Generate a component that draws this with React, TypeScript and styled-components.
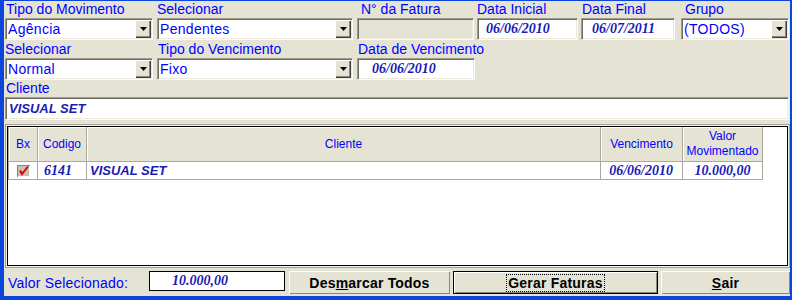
import React from 'react'
import styled, {createGlobalStyle} from 'styled-components'

const FACE = '#e5e4d4'
const BLUE = '#0000ff'
const INK = '#1a1ab4'
const GRID_LINE = '#aaa99c'

const GlobalStyle = createGlobalStyle`
  * { box-sizing: border-box; }
  body {
    margin: 0;
    background: #fff;
    font-family: 'Liberation Sans', Arial, sans-serif;
  }
`

const Window = styled.div`
  width: 792px;
  height: 300px;
  background: ${FACE};
  border-style: solid;
  border-color: #0c45dc;
  border-width: 1px 2px 4px 4px;
  padding-left: 1px;
  display: flex;
  flex-direction: column;
  overflow: hidden;
`

const Row = styled.div<{$mt?: number}>`
  display: flex;
  margin-top: ${(p) => p.$mt || 0}px;
`

const Field = styled.div<{$w: number; $ml?: number}>`
  width: ${(p) => p.$w}px;
  margin-left: ${(p) => p.$ml || 0}px;
  display: flex;
  flex-direction: column;
`

const Label = styled.label<{$indent?: number}>`
  height: 17px;
  line-height: 17px;
  padding-left: ${(p) => p.$indent || 0}px;
  font-size: 14px;
  color: ${BLUE};
  white-space: nowrap;
`

const Sunken = styled.div<{$h?: number; $disabled?: boolean}>`
  height: ${(p) => p.$h || 22}px;
  background: ${(p) => (p.$disabled ? FACE : '#fff')};
  border: 1px solid;
  border-color: #9d9b8c #fbfbf8 #fbfbf8 #9d9b8c;
  box-shadow: inset 1px 1px 0 #6f6d62, inset -1px -1px 0 #eceadf;
  display: flex;
  align-items: center;
`

const SelectText = styled.span`
  flex: 1;
  padding-left: 2px;
  font-size: 14px;
  letter-spacing: 0.3px;
  color: ${BLUE};
  white-space: nowrap;
`

const DropButton = styled.span`
  width: 16px;
  height: 18px;
  margin-right: 1px;
  background: ${FACE};
  box-shadow: inset 1px 1px 0 #fff, inset -1px -1px 0 #404040,
    inset -2px -2px 0 #8a887c;
  display: flex;
  align-items: center;
  justify-content: center;
`

const DateText = styled.span<{$pad: number}>`
  padding-left: ${(p) => p.$pad}px;
  font-family: 'Liberation Serif', 'Times New Roman', serif;
  font-weight: bold;
  font-style: italic;
  font-size: 14px;
  color: ${INK};
`

const ClientText = styled.span`
  padding-left: 3px;
  font-weight: bold;
  font-style: italic;
  font-size: 13px;
  color: ${INK};
`

const GridFrame = styled.div`
  margin-top: 4px;
  width: 785px;
  height: 144px;
  padding: 2px;
  background: #fff;
  border: 1px solid #a3a192;
  box-shadow: inset 0 0 0 1px #f4f3ec, inset 0 0 0 2px #000;
`

const Table = styled.div`
  width: 754px;
  display: grid;
  grid-template-columns: 29px 49px 514px 82px 80px;
  grid-template-rows: 35px 18px;
  border-left: 1px solid ${GRID_LINE};
`

const HeadCell = styled.div`
  background: ${FACE};
  border-right: 1px solid ${GRID_LINE};
  border-bottom: 1px solid ${GRID_LINE};
  box-shadow: inset 1px 1px 0 #fff;
  display: flex;
  align-items: center;
  justify-content: center;
  text-align: center;
  font-size: 12px;
  line-height: 15px;
  color: ${BLUE};
`

const Cell = styled.div<{$align?: string; $pad?: number; $serif?: boolean}>`
  border-right: 1px solid ${GRID_LINE};
  border-bottom: 1px solid ${GRID_LINE};
  display: flex;
  align-items: center;
  justify-content: ${(p) => p.$align || 'flex-start'};
  padding: 0 ${(p) => p.$pad || 0}px;
  font-family: ${(p) =>
    p.$serif
      ? "'Liberation Serif', 'Times New Roman', serif"
      : "'Liberation Sans', Arial, sans-serif"};
  font-weight: bold;
  font-style: italic;
  font-size: ${(p) => (p.$serif ? 14 : 13)}px;
  color: ${INK};
  white-space: nowrap;
`

const Footer = styled.div`
  margin-top: 3px;
  height: 23px;
  display: flex;
`

const FooterLabel = styled.span`
  width: 144px;
  padding-left: 3px;
  align-self: center;
  font-size: 14px;
  letter-spacing: 0.2px;
  color: ${BLUE};
`

const ValueBox = styled.div`
  width: 136px;
  height: 20px;
  padding-left: 22px;
  background: #fff;
  border: 1px solid #000;
  display: flex;
  align-items: center;
  font-family: 'Liberation Serif', 'Times New Roman', serif;
  font-weight: bold;
  font-style: italic;
  font-size: 14px;
  color: ${INK};
`

const Button = styled.button<{$w: number; $ml: number; $default?: boolean}>`
  width: ${(p) => p.$w}px;
  height: 23px;
  margin-left: ${(p) => p.$ml}px;
  padding: 0;
  background: ${FACE};
  border: ${(p) => (p.$default ? '1px solid #000' : 'none')};
  box-shadow: inset 1px 1px 0 #fff, inset -1px -1px 0 #8a887c;
  display: flex;
  align-items: center;
  justify-content: center;
  font-family: 'Liberation Sans', Arial, sans-serif;
  font-weight: bold;
  font-size: 14px;
  letter-spacing: 0.2px;
  color: #000;
`

const Focus = styled.span`
  border: 1px dotted #000;
  padding: 0 1px;
  line-height: 16px;
`

const Arrow = () => (
  <svg width="7" height="4" viewBox="0 0 7 4">
    <polygon points="0,0 7,0 3.5,4" fill="#000" />
  </svg>
)

const Check = () => (
  <svg width="13" height="12" viewBox="0 0 13 12">
    <rect x="0.5" y="0.5" width="12" height="11" fill="#c4c2b8" stroke="#85837a" />
    <line x1="1" y1="11.5" x2="12.5" y2="11.5" stroke="#fff" />
    <line x1="12.5" y1="1" x2="12.5" y2="11.5" stroke="#fff" />
    <polyline points="3,5.5 5,9 11,1.5" fill="none" stroke="#e00000" strokeWidth="2" />
  </svg>
)

const Select = ({value}: {value: string}) => (
  <Sunken>
    <SelectText>{value}</SelectText>
    <DropButton>
      <Arrow />
    </DropButton>
  </Sunken>
)

const App = () => {
  return (
    <>
      <GlobalStyle />
      <Window>
        <Row>
          <Field $w={148}>
            <Label $indent={1}>Tipo do Movimento</Label>
            <Select value="Agência" />
          </Field>
          <Field $w={196} $ml={4}>
            <Label>Selecionar</Label>
            <Select value="Pendentes" />
          </Field>
          <Field $w={117} $ml={4}>
            <Label $indent={4}>N° da Fatura</Label>
            <Sunken $disabled />
          </Field>
          <Field $w={101} $ml={3}>
            <Label>Data Inicial</Label>
            <Sunken>
              <DateText $pad={8}>06/06/2010</DateText>
            </Sunken>
          </Field>
          <Field $w={94} $ml={3}>
            <Label $indent={1}>Data Final</Label>
            <Sunken>
              <DateText $pad={10}>06/07/2011</DateText>
            </Sunken>
          </Field>
          <Field $w={108} $ml={6}>
            <Label $indent={4}>Grupo</Label>
            <Select value="(TODOS)" />
          </Field>
        </Row>
        <Row $mt={1}>
          <Field $w={148}>
            <Label>Selecionar</Label>
            <Select value="Normal" />
          </Field>
          <Field $w={196} $ml={4}>
            <Label $indent={1}>Tipo do Vencimento</Label>
            <Select value="Fixo" />
          </Field>
          <Field $w={118} $ml={4}>
            <Label $indent={1}>Data de Vencimento</Label>
            <Sunken>
              <DateText $pad={14}>06/06/2010</DateText>
            </Sunken>
          </Field>
        </Row>
        <Row>
          <Field $w={784}>
            <Label $indent={1}>Cliente</Label>
            <Sunken $h={23}>
              <ClientText>VISUAL SET</ClientText>
            </Sunken>
          </Field>
        </Row>
        <GridFrame>
          <Table>
            <HeadCell>Bx</HeadCell>
            <HeadCell>Codigo</HeadCell>
            <HeadCell>Cliente</HeadCell>
            <HeadCell>Vencimento</HeadCell>
            <HeadCell>
              Valor
              <br />
              Movimentado
            </HeadCell>
            <Cell $align="center">
              <Check />
            </Cell>
            <Cell $pad={6} $serif>
              6141
            </Cell>
            <Cell $pad={3}>VISUAL SET</Cell>
            <Cell $align="flex-end" $pad={9} $serif>
              06/06/2010
            </Cell>
            <Cell $align="center" $serif>
              10.000,00
            </Cell>
          </Table>
        </GridFrame>
        <Footer>
          <FooterLabel>Valor Selecionado:</FooterLabel>
          <ValueBox>10.000,00</ValueBox>
          <Button $w={161} $ml={4}>
            Des<u>m</u>arcar Todos
          </Button>
          <Button $w={205} $ml={3} $default>
            <Focus>Gerar Faturas</Focus>
          </Button>
          <Button $w={129} $ml={3}>
            <u>S</u>air
          </Button>
        </Footer>
      </Window>
    </>
  )
}

export default App
